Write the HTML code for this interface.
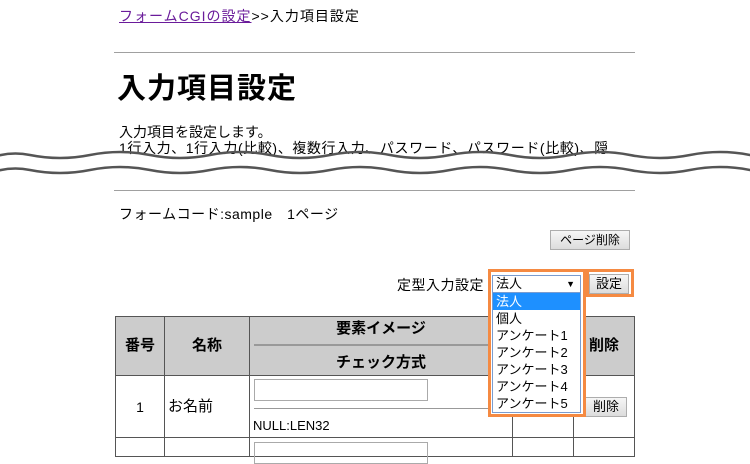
<!DOCTYPE html>
<html><head><meta charset="utf-8"><style>
body{margin:0;width:750px;height:450px;overflow:hidden;background:#fff;font-family:"Liberation Sans","Noto Sans CJK JP",sans-serif;font-size:14px;color:#000;position:relative}
.a{position:absolute;white-space:nowrap}
.hr{position:absolute;left:114px;width:521px;height:1px;background:#a0a0a0}
.btn{position:absolute;border:1px solid #adadad;background:linear-gradient(#f6f6f6,#dcdcdc);font-size:12px;text-align:center;box-sizing:border-box}
.c{position:absolute;box-sizing:border-box;border:1px solid #555}
.h{background:#ccc;font-weight:bold;font-size:15px;text-align:center}
</style></head><body>
<div class="a" style="left:119px;top:6px;font-size:14px;letter-spacing:1px"><span style="color:#6a1b9a;text-decoration:underline">フォームCGIの設定</span>&gt;&gt;入力項目設定</div>
<div class="hr" style="top:52px"></div>
<div class="a" style="left:117px;top:65px;font-size:29px;font-weight:bold;letter-spacing:1px">入力項目設定</div>
<div class="a" style="left:119px;top:124px;font-size:14px;line-height:16px">入力項目を設定します。<br><span style="letter-spacing:0.6px">1行入力、1行入力(比較)、複数行入力、パスワード、パスワード(比較)、隠</span></div>
<svg style="position:absolute;left:0;top:0" width="750" height="200">
<rect x="0" y="156" width="750" height="16" fill="#fff"/>
<path d="M-10,158 Q10,151 30,155 Q60,161 90,155 Q120,149 150,155 Q180,161 210,155 Q240,149 270,155 Q300,161 330,155 Q360,149 390,155 Q420,161 450,155 Q480,149 510,155 Q540,161 570,155 Q600,149 630,155 Q660,161 690,155 Q720,149 750,155 Q760,157 770,158" fill="none" stroke="#555" stroke-width="2.5"/>
<path d="M-10,173 Q10,166 30,170 Q60,176 90,170 Q120,164 150,170 Q180,176 210,170 Q240,164 270,170 Q300,176 330,170 Q360,164 390,170 Q420,176 450,170 Q480,164 510,170 Q540,176 570,170 Q600,164 630,170 Q660,176 690,170 Q720,164 750,170 Q760,172 770,173" fill="none" stroke="#555" stroke-width="2.5"/>
</svg>
<div class="hr" style="top:190px"></div>
<div class="a" style="left:119px;top:204px;letter-spacing:0.5px">フォームコード:sample　1ページ</div>
<div class="btn" style="left:550px;top:230px;width:80px;height:20px;line-height:18px">ページ削除</div>
<div class="a" style="left:397px;top:275px;letter-spacing:0.5px">定型入力設定</div>
<div class="c h" style="left:115px;top:316px;width:50px;height:60px;line-height:58px">番号</div>
<div class="c h" style="left:164px;top:316px;width:86px;height:60px;line-height:58px">名称</div>
<div class="c h" style="left:249px;top:316px;width:264px;height:60px"><div style="line-height:24px">要素イメージ</div><div style="margin:3px 4px;border-top:2px solid #999"></div><div style="line-height:28px">チェック方式</div></div>
<div class="c h" style="left:512px;top:316px;width:62px;height:60px"></div>
<div class="c h" style="left:573px;top:316px;width:62px;height:60px;line-height:58px">削除</div>
<div class="c" style="left:115px;top:375px;width:50px;height:63px;text-align:center;line-height:62px">1</div>
<div class="c" style="left:164px;top:375px;width:86px;height:63px;line-height:62px;padding-left:3px;font-size:15px">お名前</div>
<div class="c" style="left:249px;top:375px;width:264px;height:63px">
<div style="position:absolute;left:4px;top:3px;width:172px;height:20px;border:1px solid #aaa"></div>
<div style="position:absolute;left:4px;right:4px;top:32px;border-top:1px solid #999"></div>
<div style="position:absolute;left:3px;top:42px;font-size:13px">NULL:LEN32</div></div>
<div class="c" style="left:512px;top:375px;width:62px;height:63px"></div>
<div class="c" style="left:573px;top:375px;width:62px;height:63px"></div>
<div class="btn" style="left:585px;top:397px;width:42px;height:20px;line-height:18px;font-size:13px">削除</div>
<div class="c" style="left:115px;top:437px;width:50px;height:20px"></div>
<div class="c" style="left:164px;top:437px;width:86px;height:20px"></div>
<div class="c" style="left:249px;top:437px;width:264px;height:20px"><div style="position:absolute;left:4px;top:4px;width:172px;height:20px;border:1px solid #aaa"></div></div>
<div class="c" style="left:512px;top:437px;width:62px;height:20px"></div>
<div class="c" style="left:573px;top:437px;width:62px;height:20px"></div>
<div style="position:absolute;left:488px;top:269px;width:98px;height:148px;border:3px solid #f58a42;box-sizing:border-box;background:#fff"></div>
<div style="position:absolute;left:586px;top:269px;width:48px;height:28px;border:3px solid #f58a42;box-sizing:border-box"></div>
<div class="btn" style="left:589px;top:274px;width:40px;height:20px;line-height:18px;font-size:13px">設定</div>
<div style="position:absolute;left:492px;top:275px;width:89px;height:18px;border:1px solid #7a9ccf;box-sizing:border-box;font-size:13px;line-height:16px;padding-left:3px">法人<span style="position:absolute;right:5px;font-size:9px">▼</span></div>
<div style="position:absolute;left:492px;top:293px;width:89px;height:120px;border:1px solid #7a9ccf;border-top:none;box-sizing:border-box;font-size:13px;line-height:17px">
<div style="background:#1e90ff;color:#fff;padding-left:3px">法人</div>
<div style="padding-left:3px">個人</div>
<div style="padding-left:3px">アンケート1</div>
<div style="padding-left:3px">アンケート2</div>
<div style="padding-left:3px">アンケート3</div>
<div style="padding-left:3px">アンケート4</div>
<div style="padding-left:3px">アンケート5</div>
</div>
</body></html>
